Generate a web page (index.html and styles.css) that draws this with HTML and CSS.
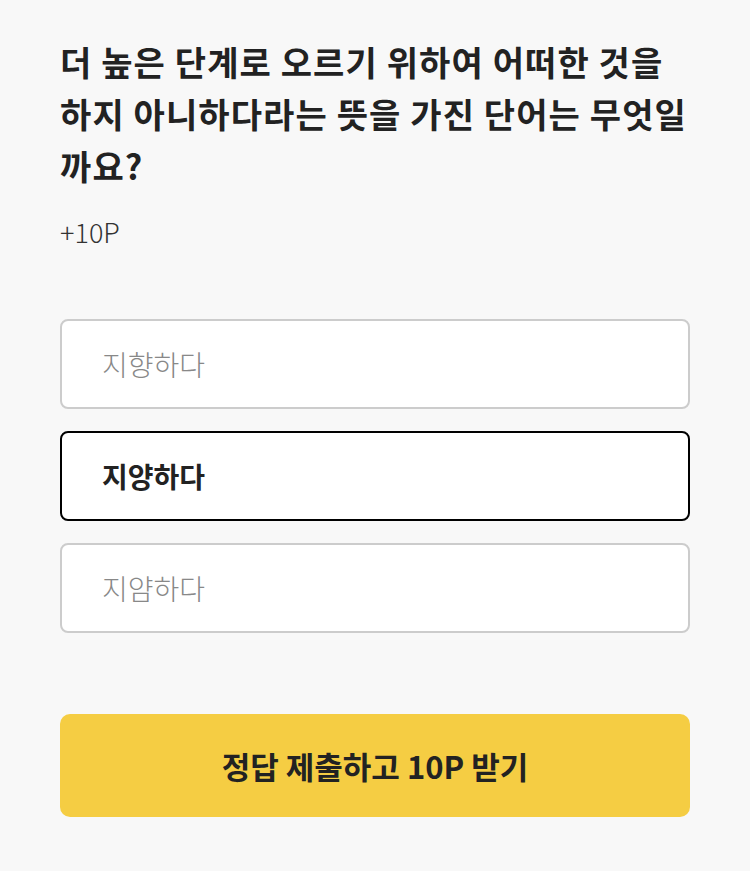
FILE: index.html
```html
<!DOCTYPE html>
<html>
<head>
    <title>퀴즈</title>
    <link rel="stylesheet" href="styles.css">
</head>
<body>
    <div class="quiz">
        <h1 class="question">더 높은 단계로 오르기 위하여 어떠한 것을 하지 아니하다라는 뜻을 가진 단어는 무엇일까요?</h1>
        <div class="point">+10P</div>

        <div class="options">
            <div class="option">지향하다</div>
            <div class="option selected">지양하다</div>
            <div class="option">지얌하다</div>
        </div>

        <button class="submit">정답 제출하고 10P 받기</button>
    </div>
</body>
</html>
```

FILE: styles.css
```css
body {
    margin: 0;
    padding: 0;
    background-color: #f8f8f8;
    font-family: "Noto Sans CJK KR", "Noto Sans", sans-serif;
    color: #222;
}
.quiz {
    padding: 36px 60px;
}
.question {
    font-size: 34px;
    font-weight: bold;
    line-height: 52px;
    margin: 0;
    letter-spacing: 1.1px;
}
.point {
    font-size: 27px;
    font-weight: 300;
    margin-top: 20px;
    color: #333;
}
.options {
    display: flex;
    flex-direction: column;
    gap: 22px;
    margin-top: 68px;
}
.option {
    height: 86px;
    display: flex;
    align-items: center;
    padding: 0 40px;
    background: white;
    border: 2px solid #ccc;
    border-radius: 8px;
    font-size: 28px;
    color: #888;
    font-weight: 300;
}
.option.selected {
    border-color: #000;
    color: #222;
    font-weight: bold;
}
.submit {
    display: block;
    width: 100%;
    height: 103px;
    margin-top: 81px;
    border: none;
    border-radius: 10px;
    background: #f5cd43;
    font-family: inherit;
    font-size: 31px;
    font-weight: bold;
    color: #222;
}
```
